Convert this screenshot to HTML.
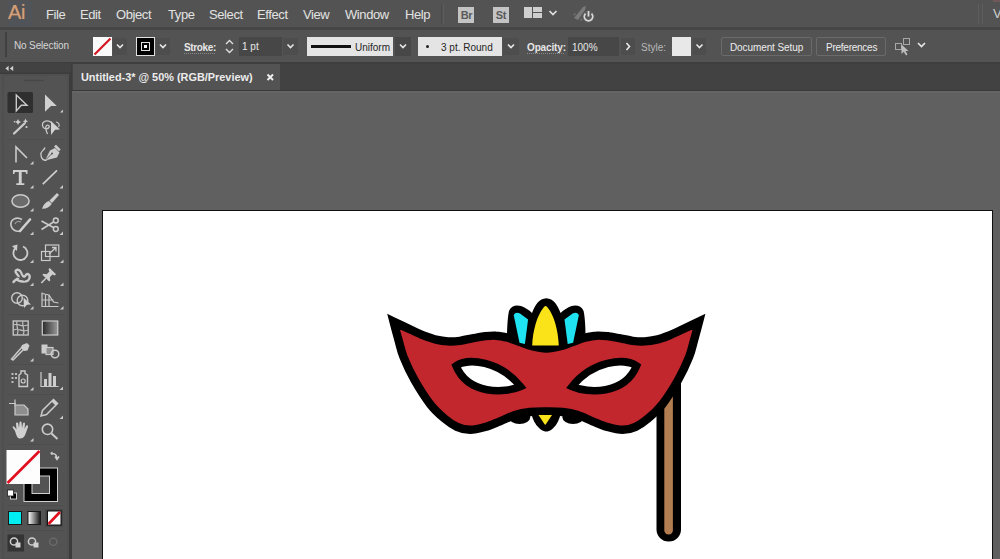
<!DOCTYPE html>
<html><head><meta charset="utf-8">
<style>
*{margin:0;padding:0;box-sizing:border-box}
html,body{width:1000px;height:559px;overflow:hidden;background:#535353;font-family:"Liberation Sans",sans-serif;position:relative}
.a{position:absolute}
#menu{left:0;top:0;width:1000px;height:27px;background:#535353}
#menusep{left:0;top:27px;width:1000px;height:3px;background:#464646}
.mi{position:absolute;top:7px;font-size:13px;letter-spacing:-0.4px;color:#e2e2e2;line-height:16px;white-space:nowrap}
#ctrl{left:0;top:30px;width:1000px;height:32px;background:#535353}
#ctrlsep{left:0;top:62px;width:1000px;height:2px;background:#3e3e3e}
.ct{position:absolute;font-size:10px;color:#e0e0e0;line-height:12px;white-space:nowrap}
#tools{left:0;top:63px;width:70px;height:496px;background:#535353}
#toolhead{left:0;top:63px;width:71px;height:11px;background:#424242}
#toolsep{left:69px;top:63px;width:3px;height:496px;background:#3c3c3c}
#tabbar{left:72px;top:64px;width:928px;height:27px;background:#424242;border-bottom:1px solid #3a3a3a}
#tab{left:73px;top:64px;width:207px;height:26px;background:#535353}
#canvas{left:72px;top:91px;width:928px;height:468px;background:#606060;border-top:2px solid #656565}
#artboard{left:102px;top:210px;width:891px;height:360px;background:#fff;border:1px solid #111}
</style></head><body>
<div id="menu" class="a"></div>
<div id="menusep" class="a"></div>
<div class="a" style="left:8px;top:1px;width:24px;height:25px;background:#505458"></div>
<div class="a" style="left:8px;top:2px;font-size:20px;color:#d4a07a;line-height:21px;letter-spacing:-0.3px;text-shadow:0 0 1px #a0704a">Ai</div>
<div class="mi" style="left:46px">File</div>
<div class="mi" style="left:80px">Edit</div>
<div class="mi" style="left:116px">Object</div>
<div class="mi" style="left:168px">Type</div>
<div class="mi" style="left:209px">Select</div>
<div class="mi" style="left:257px">Effect</div>
<div class="mi" style="left:303px">View</div>
<div class="mi" style="left:345px">Window</div>
<div class="mi" style="left:405px">Help</div>

<div class="a" style="left:441px;top:4px;width:1px;height:20px;background:#4a4a4a"></div>
<div class="a" style="left:443px;top:4px;width:1px;height:20px;background:#5c5c5c"></div>
<div class="a" style="left:458px;top:7px;width:16px;height:16px;background:#c4c4c4"></div>
<div class="a" style="left:459px;top:8px;width:15px;font-size:11px;font-weight:bold;color:#5a5a5a;line-height:14px;text-align:center;letter-spacing:-0.3px">Br</div>
<div class="a" style="left:493px;top:7px;width:16px;height:16px;background:#c4c4c4"></div>
<div class="a" style="left:493px;top:8px;width:16px;font-size:11px;font-weight:bold;color:#5a5a5a;line-height:14px;text-align:center;letter-spacing:-0.3px">St</div>
<svg class="a" style="left:524px;top:7px" width="18" height="12"><rect x="0" y="0" width="8" height="11" fill="#cfcfcf"/><rect x="9" y="0" width="9" height="5" fill="#cfcfcf"/><rect x="9" y="6" width="9" height="5" fill="#cfcfcf"/></svg>
<svg class="a" style="left:548px;top:9px" width="11" height="8"><path d="M1.5 2 L5 5.5 L8.5 2" fill="none" stroke="#e0e0e0" stroke-width="1.7"/></svg>
<svg class="a" style="left:571px;top:4px" width="26" height="20"><path d="M3 14 L12 3 L15 2 L14 6 L7 16 Z" fill="#7a7a7a"/><path d="M2 10 L5 9 L4 12 Z M9 17 L10 14 L12 16 Z" fill="#6f6f6f"/><circle cx="17.5" cy="12.5" r="6.5" fill="#5a5a5a"/><path d="M14.5 9.6 A4.2 4.2 0 1 0 20.5 9.6" fill="none" stroke="#d8d8d8" stroke-width="1.8"/><line x1="17.5" y1="7" x2="17.5" y2="12.5" stroke="#d8d8d8" stroke-width="1.8"/></svg>
<div class="a" style="left:978px;top:4px;width:1px;height:20px;background:#5e5e5e"></div>
<div class="a" style="left:982px;top:4px;width:1px;height:20px;background:#5e5e5e"></div>
<div class="mi" style="left:993px;top:5.5px;color:#cfcfcf">V</div>
<div class="a" style="left:993px;top:0px;width:7px;height:2px;background:#6e5858"></div>


<div id="ctrl" class="a"></div>
<div id="ctrlsep" class="a"></div>

<div class="a" style="left:5px;top:32px;width:2px;height:25px;background:#404040"></div>
<div class="ct" style="left:14px;top:40px;color:#d6d6d6;letter-spacing:-0.15px">No Selection</div>
<!-- fill swatch -->
<svg class="a" style="left:93px;top:37px" width="19" height="19"><rect x="0" y="0" width="19" height="19" fill="#fafafa"/><line x1="1.5" y1="17.5" x2="17.5" y2="1.5" stroke="#d0161e" stroke-width="2.2"/></svg>
<div class="a" style="left:113px;top:38px;width:14px;height:17px;background:#4d4d4d"></div>
<svg class="a" style="left:113px;top:38px" width="14" height="17"><path d="M4 6.5 L7 9.5 L10 6.5" fill="none" stroke="#e8e8e8" stroke-width="1.6"/></svg>
<!-- stroke swatch -->
<svg class="a" style="left:136px;top:37px" width="19" height="19"><rect x="0.5" y="0.5" width="18" height="18" fill="#000" stroke="#e0e0e0" stroke-width="1"/><rect x="5.5" y="5.5" width="8" height="8" fill="none" stroke="#e0e0e0" stroke-width="1"/><rect x="8" y="8" width="3" height="3" fill="#fff"/></svg>
<div class="a" style="left:156px;top:38px;width:14px;height:17px;background:#4d4d4d"></div>
<svg class="a" style="left:156px;top:38px" width="14" height="17"><path d="M4 6.5 L7 9.5 L10 6.5" fill="none" stroke="#e8e8e8" stroke-width="1.6"/></svg>
<!-- Stroke: -->
<div class="ct" style="left:184px;top:42px;font-weight:bold;color:#e6e6e6;letter-spacing:-0.35px">Stroke:</div>
<div class="a" style="left:184px;top:53px;width:31px;height:0;border-top:1px dotted #8a8a8a"></div>
<svg class="a" style="left:223px;top:37px" width="13" height="19"><path d="M3 7 L6.5 3.5 L10 7 M3 12 L6.5 15.5 L10 12" fill="none" stroke="#dedede" stroke-width="1.4"/></svg>
<div class="a" style="left:239px;top:37px;width:43px;height:19px;background:#474747"></div>
<div class="ct" style="left:242px;top:41px;color:#e8e8e8">1 pt</div>
<div class="a" style="left:283px;top:38px;width:15px;height:17px;background:#4d4d4d"></div>
<svg class="a" style="left:283px;top:38px" width="15" height="17"><path d="M4.5 6.5 L7.5 9.5 L10.5 6.5" fill="none" stroke="#e8e8e8" stroke-width="1.6"/></svg>
<!-- Uniform -->
<div class="a" style="left:307px;top:37px;width:86px;height:19px;background:#e4e4e4"></div>
<div class="a" style="left:311px;top:45px;width:40px;height:3px;background:#111"></div>
<div class="ct" style="left:355px;top:42px;color:#262626">Uniform</div>
<div class="a" style="left:395px;top:37px;width:16px;height:19px;background:#474747"></div>
<svg class="a" style="left:395px;top:37px" width="16" height="19"><path d="M5 7.5 L8 10.5 L11 7.5" fill="none" stroke="#e8e8e8" stroke-width="1.6"/></svg>
<!-- brush -->
<div class="a" style="left:418px;top:37px;width:84px;height:19px;background:#e4e4e4"></div>
<div class="a" style="left:426px;top:45px;width:3px;height:3px;background:#222;border-radius:50%"></div>
<div class="ct" style="left:441px;top:42px;color:#262626">3 pt. Round</div>
<div class="a" style="left:503px;top:38px;width:16px;height:17px;background:#4d4d4d"></div>
<svg class="a" style="left:503px;top:38px" width="16" height="17"><path d="M5 6.5 L8 9.5 L11 6.5" fill="none" stroke="#e8e8e8" stroke-width="1.6"/></svg>
<!-- Opacity -->
<div class="ct" style="left:527px;top:42px;font-weight:bold;color:#e6e6e6;letter-spacing:-0.15px">Opacity:</div>
<div class="a" style="left:527px;top:53px;width:37px;height:0;border-top:1px dotted #8a8a8a"></div>
<div class="a" style="left:568px;top:37px;width:51px;height:19px;background:#474747"></div>
<div class="ct" style="left:572px;top:42px;color:#e8e8e8">100%</div>
<div class="a" style="left:621px;top:38px;width:14px;height:17px;background:#4d4d4d"></div>
<svg class="a" style="left:621px;top:38px" width="14" height="17"><path d="M5.5 5 L8.5 8.5 L5.5 12" fill="none" stroke="#e8e8e8" stroke-width="1.6"/></svg>
<!-- Style -->
<div class="ct" style="left:641px;top:42px;color:#b8b8b8">Style:</div>
<div class="a" style="left:672px;top:37px;width:19px;height:19px;background:#e8e8e8"></div>
<div class="a" style="left:693px;top:38px;width:13px;height:17px;background:#4d4d4d"></div>
<svg class="a" style="left:693px;top:38px" width="13" height="17"><path d="M3.5 6.5 L6.5 9.5 L9.5 6.5" fill="none" stroke="#e8e8e8" stroke-width="1.6"/></svg>
<!-- buttons -->
<div class="a" style="left:721px;top:37px;width:91px;height:19px;border:1px solid #6a6a6a;border-radius:2px;background:#535353"></div>
<div class="ct" style="left:730px;top:42px;color:#ececec;letter-spacing:-0.1px">Document Setup</div>
<div class="a" style="left:816px;top:37px;width:70px;height:19px;border:1px solid #6a6a6a;border-radius:2px;background:#535353"></div>
<div class="ct" style="left:826px;top:42px;color:#ececec;letter-spacing:-0.25px">Preferences</div>
<svg class="a" style="left:894px;top:37px" width="20" height="19"><rect x="1.5" y="6.5" width="6" height="6" fill="none" stroke="#a8a8a8"/><rect x="9.5" y="1.5" width="6" height="6" fill="none" stroke="#a8a8a8"/><path d="M7.5 7.5 L7.5 17 L9.8 14.8 L12 18.5 L13.5 17.6 L11.5 14 L14.5 14 Z" fill="#bdbdbd"/></svg>
<svg class="a" style="left:915px;top:38px" width="14" height="14"><path d="M3 5 L6.5 8.5 L10 5" fill="none" stroke="#e8e8e8" stroke-width="1.6"/></svg>


<div id="tools" class="a"></div>
<div id="toolhead" class="a"></div>
<div id="toolsep" class="a"></div>
<svg class="a" style="left:0;top:0" width="72" height="559" viewBox="0 0 72 559">
<defs>
<linearGradient id="gbtn" x1="0" x2="1" y1="0" y2="0"><stop offset="0" stop-color="#fff"/><stop offset="1" stop-color="#111"/></linearGradient>
<linearGradient id="gtool" x1="0" x2="1" y1="0" y2="0"><stop offset="0" stop-color="#2a2a2a"/><stop offset="1" stop-color="#9a9a9a"/></linearGradient>
</defs>
<rect x="0" y="63" width="71" height="11" fill="#424242"/><rect x="0" y="72.5" width="71" height="1.5" fill="#3c3c3c"/>
<path d="M8.6 65.7 L5.4 68.4 L8.6 71 Z M13.2 65.7 L9.8 68.4 L13.2 71 Z" fill="#d0d0d0"/>
<rect x="3" y="75" width="65" height="484" fill="none" stroke="#4c4c4c" stroke-width="1"/>
<line x1="24" y1="80.5" x2="44" y2="80.5" stroke="#484848" stroke-width="1.5"/>
<g fill="none" stroke="#4d4d4d" stroke-width="1">
<line x1="7" y1="139.5" x2="64" y2="139.5"/>
<line x1="7" y1="314.5" x2="64" y2="314.5"/>
<line x1="7" y1="364.5" x2="64" y2="364.5"/>
<line x1="7" y1="394.5" x2="64" y2="394.5"/>
<line x1="7" y1="444.5" x2="64" y2="444.5"/>
<line x1="7" y1="505.5" x2="64" y2="505.5"/>
<line x1="7" y1="530.5" x2="64" y2="530.5"/>
</g>
<!-- selected bg -->
<rect x="7.5" y="92" width="25.5" height="21" rx="1.5" fill="#2f2f2f"/>
<g fill="#c9c9c9" stroke="none">
<!-- corner triangles -->
<path d="M63 109.5 L63 112.5 L60 112.5 Z"/>
<path d="M33.5 161 L33.5 164.5 L30 164.5 Z"/>
<path d="M33.5 185 L33.5 188.5 L30 188.5 Z"/>
<path d="M63 185 L63 188.5 L59.5 188.5 Z"/>
<path d="M33.5 208 L33.5 211.5 L30 211.5 Z"/>
<path d="M63 208 L63 211.5 L59.5 211.5 Z"/>
<path d="M33.5 231.5 L33.5 235 L30 235 Z"/>
<path d="M63 231.5 L63 235 L59.5 235 Z"/>
<path d="M33.5 259.5 L33.5 263 L30 263 Z"/>
<path d="M63.5 259.5 L63.5 263 L60 263 Z"/>
<path d="M33.5 282.5 L33.5 286 L30 286 Z"/>
<path d="M63.5 282.5 L63.5 286 L60 286 Z"/>
<path d="M33.5 306 L33.5 309.5 L30 309.5 Z"/>
<path d="M63.5 306 L63.5 309.5 L60 309.5 Z"/>
<path d="M33.5 358 L33.5 361.5 L30 361.5 Z"/>
<path d="M33.5 387 L33.5 390.5 L30 390.5 Z"/>
<path d="M63 386.5 L63 390 L59.5 390 Z"/>
<path d="M63 415.5 L63 419 L59.5 419 Z"/>
<path d="M33.5 438 L33.5 441.5 L30 441.5 Z"/>
</g>
<!-- 1 selection (outline) -->
<path d="M16.3 95 L27 105.3 L21.3 105.3 L16.3 111 Z" fill="none" stroke="#c9c9c9" stroke-width="1.4" stroke-linejoin="miter"/>
<!-- 2 direct selection -->
<path d="M45 94.5 L56.8 106 L51 106 L45 111.8 Z" fill="#d0d0d0"/>
<!-- 3 magic wand -->
<line x1="14" y1="133.5" x2="24.5" y2="123.5" stroke="#cdcdcd" stroke-width="2.2" stroke-linecap="round"/>
<g fill="#d0d0d0"><path d="M18 119 L19 121 L21 122 L19 123 L18 125 L17 123 L15 122 L17 121 Z"/><path d="M25.5 118.5 L26.3 120.5 L28.3 121.3 L26.3 122.1 L25.5 124.1 L24.7 122.1 L22.7 121.3 L24.7 120.5 Z"/><circle cx="26.5" cy="127" r="1.1"/><circle cx="14.5" cy="121.8" r="0.8"/></g>
<!-- 4 lasso -->
<path d="M52 123 C48 119.5 42 120.5 42.5 125.5 C43 129 47 130 49 127.5 C50 126 48 124.5 46.5 125.5 C45 126.5 46 131 47.5 134" fill="none" stroke="#c9c9c9" stroke-width="1.3"/>
<path d="M51 121 L60 129.5 L55 129.8 L51 135 Z" fill="#d2d2d2"/>
<path d="M56 122 C59 122.5 60 125 58.5 127" fill="none" stroke="#c9c9c9" stroke-width="1.2"/>
<!-- 5 anchor point -->
<path d="M16 162.5 L16 147 L27 158" fill="none" stroke="#cbcbcb" stroke-width="1.6"/>
<!-- 6 pen -->
<path d="M41 155 C40 151 44 151 45 147.5 M41 155 C41 159 44 161 47 160" fill="none" stroke="#cbcbcb" stroke-width="1.3"/>
<path d="M45 160.5 L50 150.5 L55 148 L59.5 152.5 L57 157.5 Z" fill="#cdcdcd"/>
<path d="M54 146.5 L56 144.8 L60.7 149.5 L59 151.3 Z" fill="#cdcdcd"/>
<path d="M46 159.5 L51.5 154" stroke="#535353" stroke-width="0.9"/>
<circle cx="52" cy="153.5" r="1" fill="#535353"/>
<!-- 7 type T -->
<path d="M13 170 L27.5 170 L27.5 174 L26.3 174 L25.5 172 L21.7 172 L21.7 183.3 L24.3 183.3 L24.3 185 L16.3 185 L16.3 183.3 L18.8 183.3 L18.8 172 L15 172 L14.2 174 L13 174 Z" fill="#d0d0d0"/>
<!-- 8 line -->
<line x1="42.8" y1="184.2" x2="57" y2="170.3" stroke="#cdcdcd" stroke-width="1.7"/>
<!-- 9 ellipse -->
<ellipse cx="20.5" cy="201" rx="8.6" ry="6.3" fill="#6b6b6b" stroke="#cbcbcb" stroke-width="1.5"/>
<!-- 10 paintbrush -->
<path d="M57 193 L59 195 L52 203 L49.5 200.5 Z" fill="#cdcdcd"/>
<path d="M49 201 L51.8 203.8 C50 207 46 209 42 208.8 C43 206 45 202 49 201 Z" fill="#cdcdcd"/>
<!-- 11 shaper -->
<path d="M22 219.5 C16 216 10 220 11 225.5 C12 230 16 232 20 231" fill="none" stroke="#c9c9c9" stroke-width="1.6"/>
<path d="M15 224 C16 221 19 221 21 222" fill="none" stroke="#9a9a9a" stroke-width="1.2"/>
<line x1="20" y1="231" x2="30" y2="219.5" stroke="#d0d0d0" stroke-width="2.6" stroke-linecap="round"/>
<!-- 12 scissors -->
<circle cx="55.8" cy="220.5" r="2.4" fill="none" stroke="#cbcbcb" stroke-width="1.5"/>
<circle cx="55.8" cy="229" r="2.4" fill="none" stroke="#cbcbcb" stroke-width="1.5"/>
<path d="M41.5 221 L53.5 227.5 M41.5 229.5 L53.5 222" fill="none" stroke="#cbcbcb" stroke-width="1.6"/>
<!-- 13 rotate -->
<path d="M15.5 248 A7 7 0 1 0 23 246.5" fill="none" stroke="#cbcbcb" stroke-width="1.8"/>
<path d="M12 246 L17.5 244.5 L17 251 Z" fill="#cbcbcb"/>
<!-- 14 scale -->
<rect x="41.5" y="251.5" width="8.5" height="9" fill="none" stroke="#cbcbcb" stroke-width="1.2"/>
<rect x="45.5" y="245" width="13.3" height="11.5" fill="none" stroke="#cbcbcb" stroke-width="1.2"/>
<path d="M49 254 L56 247.5 M52 247.5 L56 247.5 L56 251.5" fill="none" stroke="#cbcbcb" stroke-width="1.3"/>
<!-- 15 warp -->
<path d="M13.5 282 C15 280 17 279.5 18.5 277.5 C19.5 275 15 273.5 15.5 271 C17 268.5 20 270 21 272.5 C22 275 22.5 277 24.5 276.5 C26 276 25.5 273.5 28 274 C30.5 275 30 279 28 280.5 C25 282.5 20 281.5 17.5 280" fill="none" stroke="#cbcbcb" stroke-width="2.4" stroke-linecap="round"/>
<path d="M14 275.5 L25 280.5 M19 272 L21.5 277" stroke="#5a5a5a" stroke-width="1"/>
<!-- 16 pin -->
<path d="M49.7 268.0 L56.0 274.3 L54.8 275.5 L52.5 274.6 L49.8 277.3 L50.2 280.5 L49.2 281.6 L42.4 274.8 L43.5 273.8 L46.7 274.2 L49.4 271.5 L48.5 269.2 Z" fill="#cdcdcd"/>
<line x1="41.3" y1="283" x2="46" y2="278.3" stroke="#cdcdcd" stroke-width="1.6"/>
<!-- 17 shape builder -->
<circle cx="17" cy="298" r="5.3" fill="none" stroke="#cbcbcb" stroke-width="1.4"/>
<circle cx="22.5" cy="300.5" r="5.3" fill="none" stroke="#cbcbcb" stroke-width="1.4"/>
<path d="M23.5 297.5 L31 304.5 L27 304.8 L24 308 Z" fill="#d2d2d2"/>
<!-- 18 perspective grid -->
<path d="M42 292.5 L42 306.5 L58.5 306.5 M42 293.5 L49 295 L53.5 302 L58.5 303 M45.5 293.8 L45.5 306.5 M49 295 L49 306.5 M42 300 L53.5 300" fill="none" stroke="#c9c9c9" stroke-width="1.2"/>
<!-- 19 mesh -->
<rect x="13.2" y="321" width="15" height="14" fill="none" stroke="#cbcbcb" stroke-width="1.3"/>
<path d="M14 325 C18 322 20 328 28 325 M14 330 C18 327 22 333 28 330 M17 321 C15 325 20 330 17 335 M23 321 C21 325 26 330 23 335" fill="none" stroke="#bdbdbd" stroke-width="1.2"/>
<!-- 20 gradient -->
<rect x="42.3" y="321" width="15.5" height="14" fill="url(#gtool)" stroke="#cbcbcb" stroke-width="1.2"/>
<!-- 21 eyedropper -->
<path d="M11.5 359 L13 360 L24 349 L22 347 Z" fill="none" stroke="#cbcbcb" stroke-width="1.5"/>
<path d="M22 345 L27 343 L29.5 345.5 L27.5 350.5 L24 351 L21 348 Z" fill="#cdcdcd"/>
<!-- 22 blend -->
<rect x="41.5" y="344.5" width="6" height="9" fill="#cdcdcd"/>
<rect x="46" y="347.5" width="7" height="7" fill="#8c8c8c" stroke="#cbcbcb" stroke-width="1.2"/>
<circle cx="55" cy="354" r="3.8" fill="none" stroke="#cbcbcb" stroke-width="1.5"/>
<!-- 23 symbol sprayer -->
<g fill="#bdbdbd"><rect x="11.5" y="373" width="2" height="2"/><rect x="15" y="373" width="2" height="2"/><rect x="11.5" y="377" width="2" height="2"/><rect x="15" y="377" width="2" height="2"/><rect x="11.5" y="381" width="2" height="2"/></g>
<path d="M21 371 L25 371 L25 373.5 L27.5 375 L27.5 386.5 L19 386.5 L19 375 L21 373.5 Z" fill="none" stroke="#cbcbcb" stroke-width="1.4"/>
<circle cx="23.2" cy="381" r="2" fill="none" stroke="#cbcbcb" stroke-width="1.2"/>
<!-- 24 column graph -->
<path d="M41 372 L41 386.5 L58.5 386.5" fill="none" stroke="#cbcbcb" stroke-width="1.2"/>
<rect x="44" y="379" width="3" height="7" fill="#cdcdcd"/>
<rect x="48.5" y="373" width="3" height="13" fill="#cdcdcd"/>
<rect x="53" y="376" width="3" height="10" fill="#cdcdcd"/>
<!-- 25 artboard -->
<path d="M9 403.5 L16 403.5 M15 399.5 L15 406" fill="none" stroke="#c9c9c9" stroke-width="1.2"/>
<path d="M15 405 L24 405 L28 409 L28 415 L15 415 Z" fill="#8e8e8e" stroke="#cbcbcb" stroke-width="1.2"/>
<!-- 26 pencil -->
<path d="M41 416 L42.5 410.5 L53.5 399.5 L57.5 403.5 L46.5 414.5 Z" fill="none" stroke="#cbcbcb" stroke-width="1.5"/>
<path d="M53.5 399.5 L57.5 403.5 L55.5 405.5 L51.5 401.5 Z" fill="#cdcdcd"/>
<!-- 27 hand -->
<path d="M15 431 L13 428 C12 427 13 425.5 14.5 427 L16.5 429.5 L16 423.5 C16 422 18 422 18.2 423.5 L19 428 L19.5 422.5 C19.5 421 21.5 421 21.6 422.5 L22 428 L23 423.5 C23.3 422 25.2 422.3 25 424 L24.5 429 L26 426 C26.7 424.7 28.5 425.5 28 427 L25.5 434 C24.5 437 22.5 438.5 20 438.5 C17.5 438.5 16.5 436 15 431 Z" fill="#d0d0d0"/>
<!-- 28 zoom -->
<circle cx="47.5" cy="429.3" r="5.2" fill="none" stroke="#cbcbcb" stroke-width="1.6"/>
<line x1="51.5" y1="433.5" x2="57.5" y2="439" stroke="#cbcbcb" stroke-width="2"/>
<!-- fill/stroke -->
<rect x="24" y="468" width="33.5" height="33.5" fill="#000" stroke="#d0d0d0" stroke-width="1"/>
<rect x="32" y="476" width="17.5" height="17.5" fill="#535353" stroke="#d0d0d0" stroke-width="1"/>
<rect x="6.5" y="450" width="33.5" height="34" fill="#fdfdfd"/>
<line x1="7.5" y1="483" x2="39.5" y2="451" stroke="#e0101e" stroke-width="2.6"/>
<path d="M51 454 C54 453 56.5 454 57 458 M55 456.5 L57 459.5 L59 456.5" fill="none" stroke="#cfcfcf" stroke-width="1.4"/>
<path d="M50 453 L52.5 451.5 L52.5 455 Z" fill="#cfcfcf"/>
<rect x="10.5" y="493" width="6" height="6" fill="#000" stroke="#cfcfcf" stroke-width="1"/>
<rect x="7.5" y="490" width="6" height="6" fill="#fff" stroke="#222" stroke-width="0.8"/>
<!-- color buttons -->
<rect x="8.5" y="511.5" width="13" height="13" fill="#00eef2" stroke="#1a1a1a" stroke-width="1"/>
<rect x="28" y="511.5" width="12.5" height="13" fill="url(#gbtn)" stroke="#1a1a1a" stroke-width="1"/>
<rect x="45.5" y="509.5" width="17" height="17" fill="#3e3e3e"/>
<rect x="47.5" y="511" width="13.5" height="14" fill="#fff" stroke="#111" stroke-width="1"/>
<line x1="48.5" y1="524" x2="60" y2="512" stroke="#e0101e" stroke-width="2.6"/>
<!-- draw modes -->
<rect x="7.5" y="534.5" width="16.5" height="17" fill="#343434"/>
<circle cx="14" cy="541.5" r="3.6" fill="none" stroke="#d0d0d0" stroke-width="1.5"/>
<rect x="15.5" y="542.5" width="5" height="5" fill="#d0d0d0"/>
<circle cx="32" cy="541.5" r="3.6" fill="none" stroke="#d0d0d0" stroke-width="1.5"/>
<rect x="33.5" y="542.5" width="5" height="5" fill="#d0d0d0"/>
<circle cx="53.3" cy="541.8" r="3.6" fill="none" stroke="#6c6c6c" stroke-width="1.3"/>
</svg>

<div id="tabbar" class="a"></div>
<div id="tab" class="a"></div>
<div class="a" style="left:81px;top:71px;font-size:10.9px;color:#ececec;font-weight:bold;line-height:13px">Untitled-3* @ 50% (RGB/Preview)</div>
<svg class="a" style="left:266px;top:73px" width="9" height="9"><path d="M1.5 1.5 L7 7 M7 1.5 L1.5 7" stroke="#f0f0f0" stroke-width="1.9"/></svg>
<div id="canvas" class="a"></div>
<div id="artboard" class="a"></div>







<svg id="masksvg" class="a" style="left:0;top:0" width="1000" height="559" viewBox="0 0 1000 559">
<!-- stick -->
<rect x="656.5" y="360" width="24.5" height="181.5" rx="12" fill="#000"/>
<rect x="664.3" y="370" width="8.6" height="164.5" rx="4.3" fill="#b27d50"/>
<!-- lobes -->
<ellipse cx="519.5" cy="417" rx="10.8" ry="7" fill="#000"/>
<ellipse cx="573.1" cy="417" rx="10.8" ry="7" fill="#000"/>
<path d="M531 410 L561 410 C560.5 421 553 431.5 546.3 431.5 C539.5 431.5 531.5 421 531 410 Z" fill="#000"/>
<!-- feathers black -->
<path d="M507 340 C507 330 507.5 318 509 311 C511 306 516 304.5 521 306 C525 307.5 529 310 532 313 C535 305 539 298.5 546.3 298.2 C553.6 298.5 557.6 305 560.6 313 C563.6 310 567.6 307.5 571.6 306 C576.6 304.5 581.6 306 583.6 311 C585.1 318 585.6 330 585.6 340 L580 352 L512 352 Z" fill="#000"/>
<!-- mask -->
<path d="M393.5 321.5 C396.6 323.0 406.9 327.9 412.0 330.3 C417.1 332.7 420.0 334.1 424.0 335.7 C428.0 337.2 432.0 338.7 436.0 339.6 C440.0 340.6 444.0 341.2 448.0 341.4 C452.0 341.6 456.0 341.3 460.0 340.8 C464.0 340.3 468.0 339.1 472.0 338.4 C476.0 337.6 480.0 336.8 484.0 336.3 C488.0 335.9 492.0 335.4 496.0 335.7 C500.0 335.9 504.0 336.8 508.0 337.8 C512.0 338.9 516.0 340.6 520.0 342.0 C524.0 343.4 527.6 345.2 532.0 346.3 C536.4 347.4 541.5 348.5 546.3 348.5 C551.1 348.5 556.2 347.4 560.6 346.3 C565.0 345.2 568.6 343.4 572.6 342.0 C576.6 340.6 580.6 338.9 584.6 337.8 C588.6 336.8 592.6 335.9 596.6 335.7 C600.6 335.4 604.6 335.9 608.6 336.3 C612.6 336.8 616.6 337.6 620.6 338.4 C624.6 339.1 628.6 340.3 632.6 340.8 C636.6 341.3 640.6 341.6 644.6 341.4 C648.6 341.2 652.6 340.6 656.6 339.6 C660.6 338.7 664.6 337.2 668.6 335.7 C672.6 334.1 675.5 332.7 680.6 330.3 C685.7 327.9 696.0 323.0 699.1 321.5 C698.3 324.6 695.8 334.1 694.1 340.0 C692.4 345.9 691.8 350.3 689.1 357.0 C686.4 363.7 682.6 372.1 678.1 380.0 C673.6 387.9 667.3 397.9 662.3 404.3 C657.3 410.7 652.5 414.9 648.0 418.6 C643.5 422.4 639.8 424.9 635.6 426.8 C631.4 428.7 627.3 429.8 622.6 429.8 C617.9 429.8 612.6 428.4 607.6 427.0 C602.6 425.6 597.6 423.3 592.6 421.3 C587.6 419.3 582.6 416.6 577.6 415.0 C572.6 413.4 567.8 412.6 562.6 412.0 C557.4 411.4 551.7 411.5 546.3 411.5 C540.9 411.5 535.2 411.4 530.0 412.0 C524.8 412.6 520.0 413.4 515.0 415.0 C510.0 416.6 505.0 419.3 500.0 421.3 C495.0 423.3 490.0 425.6 485.0 427.0 C480.0 428.4 474.7 429.8 470.0 429.8 C465.3 429.8 461.2 428.7 457.0 426.8 C452.8 424.9 449.1 422.4 444.6 418.6 C440.2 414.9 435.3 410.7 430.3 404.3 C425.3 397.9 419.0 387.9 414.5 380.0 C410.0 372.1 406.2 363.7 403.5 357.0 C400.8 350.3 400.2 345.9 398.5 340.0 C396.8 334.1 394.3 324.6 393.5 321.5 Z" fill="#c1272d" stroke="#000" stroke-width="8.4" stroke-linejoin="miter" stroke-miterlimit="10"/>
<path d="M456.0 365.8 C468.0 357.6 500.0 360.8 520.5 386.5 C505.0 393.5 468.0 395.0 456.0 365.8 Z" fill="#fff" stroke="#000" stroke-width="7.5" stroke-linejoin="miter" stroke-miterlimit="4"/>
<path d="M636.6 365.8 C624.6 357.6 592.6 360.8 572.1 386.5 C587.6 393.5 624.6 395.0 636.6 365.8 Z" fill="#fff" stroke="#000" stroke-width="7.5" stroke-linejoin="miter" stroke-miterlimit="4"/>
<path d="M513.8 315.5 C514.3 312.8 517 312.2 520 313.6 L528.1 319.5 L524.9 344 L519.5 342.8 Z" fill="#1fe3f0"/>
<path d="M578.8 315.5 C578.3 312.8 575.6 312.2 572.6 313.6 L564.5 319.5 L567.7 344 L573.1 342.8 Z" fill="#1fe3f0"/>
<path d="M532.2 345.5 C532.8 330 537.5 315 543.2 308 C544.9 305.3 546.3 305.3 548 308 C553.8 315 558.2 330 558.8 345.5 Z" fill="#fbe319"/>
<path d="M538.5 415 L552 415 L546 424 C545.5 425 544.9 425 544.4 424 Z" fill="#fbe319"/>
</svg>
</body></html>
